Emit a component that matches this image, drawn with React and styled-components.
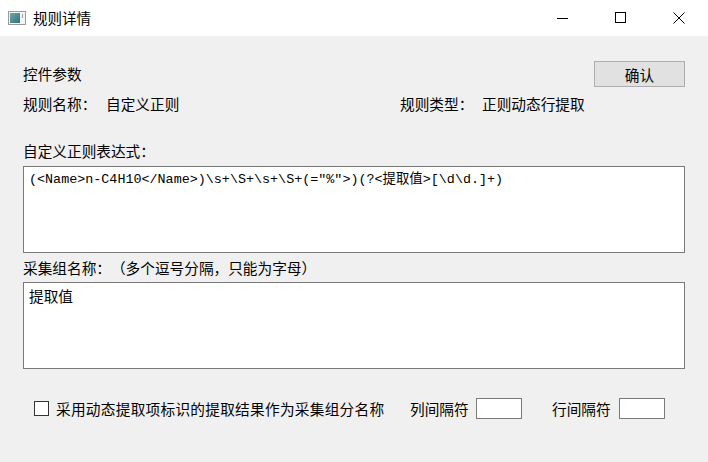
import React from "react";
import styled, { createGlobalStyle } from "styled-components";

const GlobalStyle = createGlobalStyle`
  html, body {
    margin: 0;
    padding: 0;
    background: #f0f0f0;
  }
  body {
    font-family: "Noto Sans CJK SC", "Liberation Sans", sans-serif;
    color: #000;
    text-spacing-trim: space-all;
  }
`;

const Window = styled.div`
  width: 708px;
  height: 462px;
  background: #f0f0f0;
  display: flex;
  flex-direction: column;
  overflow: hidden;
`;

const TitleBar = styled.div`
  height: 36px;
  background: #fff;
  display: flex;
  align-items: center;
`;

const TitleIcon = styled.svg`
  margin-left: 8px;
  width: 18px;
  height: 14px;
`;

const TitleText = styled.span`
  margin-left: 7px;
  font-size: 14.5px;
  line-height: 20px;
`;

const Controls = styled.div`
  margin-left: auto;
  display: flex;
  height: 100%;
`;

const ControlButton = styled.div`
  width: 58px;
  height: 100%;
  display: flex;
  align-items: center;
  justify-content: center;
`;

const Body = styled.div`
  padding: 0 23px;
  display: flex;
  flex-direction: column;
`;

const HeaderRow = styled.div`
  margin-top: 25px;
  height: 26px;
  display: flex;
  align-items: center;
  justify-content: space-between;
`;

const Text = styled.span`
  font-size: 14.67px;
  line-height: 20px;
  white-space: nowrap;
  width: ${(p) => (p.$w ? `${p.$w}px` : "auto")};
  letter-spacing: ${(p) => p.$ls || 0}px;
  flex-shrink: 0;
`;

const Button = styled.button`
  width: 91px;
  height: 26px;
  background: #e1e1e1;
  border: 1px solid #adadad;
  font-family: inherit;
  font-size: 14.67px;
  padding: 0;
  color: #000;
`;

const InfoRow = styled.div`
  margin-top: 7px;
  height: 20px;
  display: flex;
  align-items: center;
`;

const FieldLabel = styled(Text)`
  display: block;
  margin-top: ${(p) => p.$top}px;
`;

const TextArea = styled.div`
  margin-top: ${(p) => p.$top}px;
  height: 87px;
  box-sizing: border-box;
  background: #fff;
  border: 1px solid #7a7a7a;
  padding: 4px 5px;
  font-family: ${(p) =>
    p.$mono
      ? `"Liberation Mono", "Noto Sans CJK SC", monospace`
      : `"Noto Sans CJK SC", sans-serif`};
  font-size: ${(p) => (p.$mono ? "13.4px" : "14.67px")};
  line-height: 18px;
  white-space: pre;
`;

const BottomRow = styled.div`
  margin-top: 29px;
  padding-left: 11px;
  height: 21px;
  display: flex;
  align-items: center;
`;

const CheckBox = styled.span`
  width: 15px;
  height: 15px;
  box-sizing: border-box;
  border: 1px solid #333;
  background: #fff;
  flex-shrink: 0;
`;

const Input = styled.span`
  width: 46px;
  height: 21px;
  box-sizing: border-box;
  border: 1px solid #7a7a7a;
  background: #fff;
  flex-shrink: 0;
`;

const Spacer = styled.span`
  width: ${(p) => p.$w}px;
  flex-shrink: 0;
`;

export default function App() {
  return (
    <>
      <GlobalStyle />
      <Window>
        <TitleBar>
          <TitleIcon viewBox="0 0 18 14">
            <defs>
              <linearGradient id="ig" x1="0" y1="0" x2="1" y2="1">
                <stop offset="0" stopColor="#6fa9a0" />
                <stop offset="1" stopColor="#2f6f86" />
              </linearGradient>
            </defs>
            <rect x="0.5" y="0.5" width="17" height="13" fill="#f4f4f4" stroke="#9a9a9a" />
            <rect x="2" y="2" width="10" height="10" fill="url(#ig)" />
            <rect x="14" y="3" width="1" height="4" fill="#9a9a9a" />
          </TitleIcon>
          <TitleText>规则详情</TitleText>
          <Controls>
            <ControlButton>
              <svg width="12" height="12" viewBox="0 0 12 12">
                <line x1="0" y1="6.5" x2="11" y2="6.5" stroke="#000" strokeWidth="1" />
              </svg>
            </ControlButton>
            <ControlButton>
              <svg width="12" height="12" viewBox="0 0 12 12">
                <rect x="0.5" y="0.5" width="10" height="10" fill="none" stroke="#000" strokeWidth="1" />
              </svg>
            </ControlButton>
            <ControlButton>
              <svg width="12" height="12" viewBox="0 0 12 12">
                <path d="M0.5 0.5 L11.5 11.5 M11.5 0.5 L0.5 11.5" stroke="#000" strokeWidth="1" />
              </svg>
            </ControlButton>
          </Controls>
        </TitleBar>
        <Body>
          <HeaderRow>
            <Text>控件参数</Text>
            <Button>确认</Button>
          </HeaderRow>
          <InfoRow>
            <Text $w={83}>规则名称：</Text>
            <Text $w={294}>自定义正则</Text>
            <Text $w={82}>规则类型：</Text>
            <Text>正则动态行提取</Text>
          </InfoRow>
          <FieldLabel $top={27}>自定义正则表达式：</FieldLabel>
          <TextArea $top={5} $mono>
            {"(<Name>n-C4H10</Name>)\\s+\\S+\\s+\\S+(=″%″>)(?<提取值>[\\d\\d.]+)"}
          </TextArea>
          <FieldLabel $top={5}>采集组名称：（多个逗号分隔，只能为字母）</FieldLabel>
          <TextArea $top={4}>提取值</TextArea>
          <BottomRow>
            <CheckBox />
            <Spacer $w={7} />
            <Text $w={354} $ls={0.27}>采用动态提取项标识的提取结果作为采集组分名称</Text>
            <Text $w={66}>列间隔符</Text>
            <Input />
            <Spacer $w={30} />
            <Text $w={67}>行间隔符</Text>
            <Input />
          </BottomRow>
        </Body>
      </Window>
    </>
  );
}
